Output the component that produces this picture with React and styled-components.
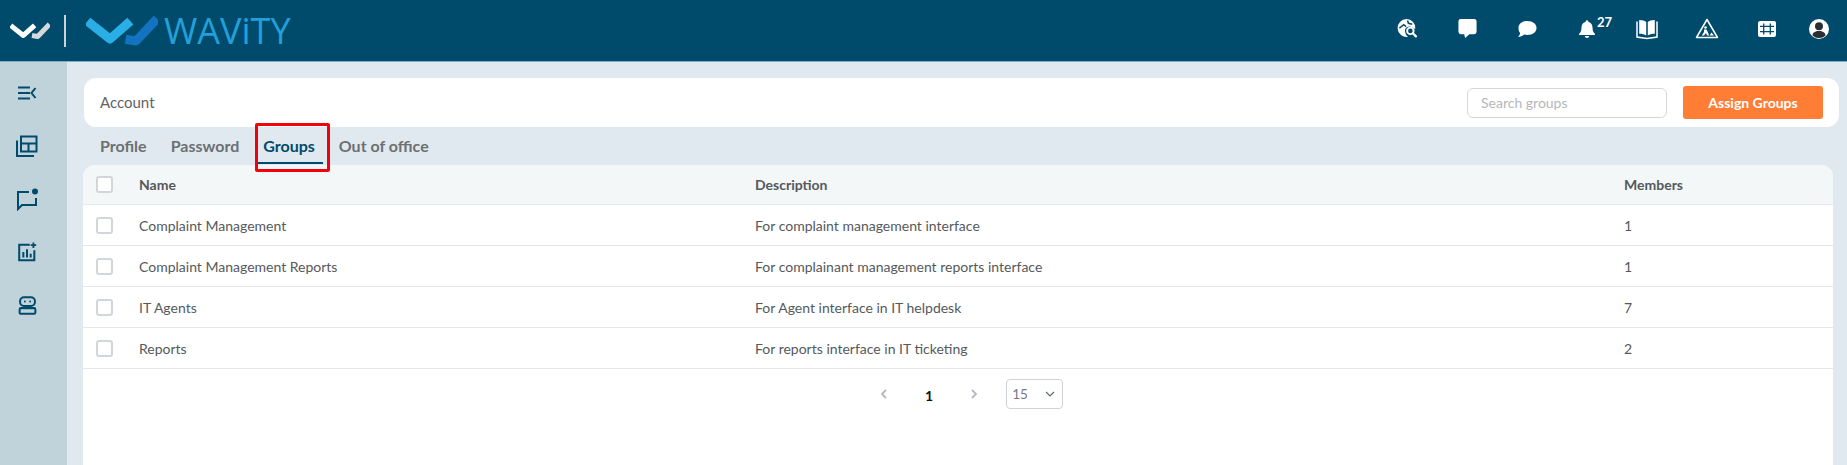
import React from "react";
import styled, { createGlobalStyle } from "styled-components";

const Global = createGlobalStyle`
  html, body { margin: 0; padding: 0; height: 100%; background: #e1e9f0; overflow: hidden; }
  body { font-family: Lato, "Open Sans", sans-serif; }
  * { box-sizing: border-box; }
`;

const Page = styled.div`
  width: 1847px; height: 465px; display: flex; flex-direction: column; overflow: hidden;
`;
const TopBar = styled.header`
  height: 62px; flex: none; background: #004b6b; border-bottom: 1px solid #7fb0c8;
  display: flex; align-items: center; justify-content: space-between;
`;
const Brand = styled.div`
  display: flex; align-items: center; padding-left: 10px;
`;
const Divider = styled.div`
  width: 2px; height: 32px; background: #c9d3d8; margin: 0 20px 0 14px;
`;
const BrandName = styled.span`
  font-family: "Open Sans", Lato, sans-serif; font-size: 36px; line-height: 1; font-weight: 500;
  color: #239fd9; margin-left: 6px;
`;
const IconBar = styled.div`
  display: flex; align-items: center; height: 100%; padding-right: 6px;
`;
const TopIcon = styled.div`
  position: relative; display: flex; align-items: center; justify-content: center;
  width: ${p => p.$w || 60}px; height: 30px; margin-top: -4px;
`;
const Badge = styled.span`
  position: absolute; left: 40px; top: 2px; font-size: 13px; font-weight: 700; color: #fff; line-height: 13px;
`;
const Body = styled.div`
  flex: 1; display: flex; min-height: 0;
`;
const SideBar = styled.nav`
  width: 67px; flex: none; background: #c0d3da; display: flex; flex-direction: column;
  align-items: flex-start; padding: 19px 0 0 15px; gap: 29px;
`;
const SideIcon = styled.div`
  width: 24px; height: 24px; display: flex; align-items: center; justify-content: center;
`;
const Main = styled.main`
  flex: 1; min-width: 0; position: relative; padding: 16px 14px 0 16px;
`;
const HeaderCard = styled.div`
  height: 49px; width: 1755px; margin-left: 1px; background: #fff; border-radius: 12px; display: flex; align-items: center;
  justify-content: space-between; padding: 0 16px;
`;
const Title = styled.div`
  font-size: 15px; color: #5f6468; padding-bottom: 2px;
`;
const Actions = styled.div`
  display: flex; align-items: center; gap: 16px;
`;
const Search = styled.input`
  width: 200px; height: 30px; border: 1px solid #d4d7da; border-radius: 6px; padding: 0 13px;
  font: 400 14px Lato, sans-serif; background: #fff; outline: none;
  &::placeholder { color: #b4b7b9; opacity: 1; }
`;
const AssignButton = styled.button`
  width: 140px; height: 33px; border: 0; border-radius: 3px; background: #ff7d34; color: #fff;
  font: 700 14px Lato, sans-serif; padding: 0;
`;
const Tabs = styled.div`
  display: flex; height: 38px; padding-left: 17px; align-items: flex-start; gap: 24px;
`;
const Tab = styled.div`
  font-size: 16px; font-weight: 700; line-height: 20px; padding-top: 9px; height: 36px;
  color: ${p => (p.$active ? "#004b6b" : "#6c7072")};
  position: relative;
  ${p => p.$active && `
    &::after { content: ""; position: absolute; left: -8px; right: -8px; top: 35px; height: 2px; background: #004b6b; }
  `}
`;
const RedBox = styled.div`
  position: absolute; left: 188px; top: 61px; width: 75px; height: 49px;
  border: 3px solid #f4000b; border-radius: 2px; pointer-events: none;
`;
const TableCard = styled.div`
  width: 1750px; height: 300px; background: #fff; border-radius: 12px 12px 0 0;
`;
const Row = styled.div`
  display: grid; grid-template-columns: 56px 616px 869px 1fr; align-items: center;
  height: ${p => (p.$head ? 40 : 41)}px; border-bottom: ${p => (p.$head ? "1px solid #e5ebef" : "1px solid #e3e7ea")};
  background: ${p => (p.$head ? "#f3f7f8" : "#fff")};
  border-radius: ${p => (p.$head ? "12px 12px 0 0" : "0")};
  color: #55595c; font-size: 14px; font-weight: ${p => (p.$head ? 700 : 400)};
`;
const CheckCell = styled.div`
  padding-left: 13px; display: flex; align-items: center;
`;
const Check = styled.span`
  display: block; width: 17px; height: 17px; border: 2px solid #d2d6da; border-radius: 3px; background: #fff;
`;
const Pager = styled.div`
  display: flex; align-items: center; height: 50px; padding-left: 795px;
`;
const PageNumber = styled.span`
  font-size: 14px; font-weight: 700; color: #111; margin: 0 35px; line-height: 20px; padding-top: 3px;
`;
const SizeSelect = styled.div`
  width: 57px; height: 30px; border: 1px solid #ced3d8; border-radius: 4px; margin-left: 26px;
  display: flex; align-items: center; justify-content: space-between; padding: 0 6px 0 5px;
  font-size: 13.5px; color: #777b7f;
`;

const LogoMark = ({ w, h, a, b }) => (
  <svg width={w} height={h} viewBox="0 0 72 30" fill="none">
    <path d="M5 9 L24 24 L41 9" stroke={a} strokeWidth="9" strokeLinejoin="round" strokeLinecap="square" transform="translate(0,-1)" />
    <path d="M44 24 L50 25 L68 6" stroke={b} strokeWidth="9" strokeLinejoin="round" strokeLinecap="square" />
  </svg>
);

const Ico = ({ size = 24, children, vb = "0 0 24 24" }) => (
  <svg width={size} height={size} viewBox={vb} fill="none">{children}</svg>
);
const W = "#fff", B = "#004b6b", G = "#004b6b";

const GlobeSearch = () => (
  <Ico size={21} vb="0 0 22 22">
    <path d="M10 1a9.500 9.500 0 1 0 1.500 18.900l-2-2.400c-1-2.500-1.500-4-1-5.500 1-3 5-4 7.600-2l3 1.500A9.500 9.500 0 0 0 10 1Z" fill={W} />
    <path d="M2.500 10.500 7 7l2.500 2M11 2.500l1 3 4 1" stroke={B} strokeWidth="1.600" />
    <circle cx="14" cy="13.500" r="3.400" stroke={W} strokeWidth="2" />
    <path d="m16.600 16 3.200 3.200" stroke={W} strokeWidth="2.400" strokeLinecap="round" />
  </Ico>
);
const SquareChat = () => (
  <Ico size={21} vb="0 0 22 22">
    <path d="M4 1h14a2.500 2.500 0 0 1 2.500 2.500v11a2.500 2.500 0 0 1-2.500 2.500h-5l-4.500 4-1-4H4a2.500 2.500 0 0 1-2.500-2.500v-11A2.500 2.500 0 0 1 4 1Z" fill={W} />
  </Ico>
);
const RoundChat = () => (
  <Ico size={22} vb="0 0 22 22">
    <path d="M11.500 3c5.300 0 9 2.900 9 7s-3.700 7-9 7c-1.300 0-2.300-.2-3.300-.5-1.700 1.600-3.700 2.500-6.200 2.500 1-1 2-2.500 2.100-4C3.100 14 2.500 12.100 2.500 10c0-4.100 3.700-7 9-7Z" fill={W} />
  </Ico>
);
const Bell = () => (
  <Ico size={20} vb="0 0 22 22">
    <path d="M11 1.500a1.600 1.600 0 0 1 1.600 1.700c3 .8 4.500 3.200 4.500 6.300 0 3.700 1 5 2.600 6.600v1.400H2.300v-1.400c1.600-1.600 2.600-2.900 2.600-6.600 0-3.100 1.500-5.500 4.500-6.300A1.600 1.600 0 0 1 11 1.500ZM8.600 18.800h4.800a2.400 2.200 0 0 1-4.800 0Z" fill={W} />
  </Ico>
);
const Book = () => (
  <Ico size={24}>
    <path d="M2 4.500v15.600l10 1.400 10-1.400V4.500" stroke={W} strokeWidth="1.500" />
    <path d="M4.200 3c3.200 0 5.800.7 7 2v13.500c-1.500-1.200-4-1.800-7-1.800V3ZM19.800 3c-3.200 0-5.800.7-7 2v13.500c1.500-1.200 4-1.800 7-1.800V3Z" fill={W} />
  </Ico>
);
const RoadSign = () => (
  <Ico size={24}>
    <path d="M12 2.500 22.500 20.500H1.500L12 2.500Z" stroke={W} strokeWidth="1.500" strokeLinejoin="round" />
    <circle cx="10.500" cy="10.500" r="1.300" fill={W} />
    <path d="M9 12.500h2.500l1.500 3 1 3H12l-1-2.500-2 2.500H6.800l2.200-3.500V12.500ZM14.500 18.500l2-3 2.500 3h-4.500Z" fill={W} />
  </Ico>
);
const Grid = () => (
  <Ico size={20} vb="0 0 20 20">
    <rect x="1" y="2" width="18" height="16" rx="2" fill={W} />
    <path d="M6.700 4.500v11M13.300 4.500v11M3 7.300h14M3 12.600h14" stroke={B} strokeWidth="1.300" />
  </Ico>
);
const Avatar = () => (
  <Ico size={20} vb="0 0 20 20">
    <circle cx="10" cy="10" r="10" fill={W} />
    <circle cx="10" cy="7.300" r="4" fill="#2a2f33" />
    <path d="M3.500 16.500c0-3 2.700-4.500 6.500-4.500s6.500 1.500 6.500 4.500A9 9 0 0 1 10 19a9 9 0 0 1-6.500-2.500Z" fill="#2a2f33" />
  </Ico>
);

const Collapse = () => (
  <Ico size={20} vb="0 0 20 20">
    <path d="M1 4.500h12M1 10h12M1 15.500h12M18.500 5 14.500 10l4 5" stroke={G} strokeWidth="2" />
  </Ico>
);
const Dashboard = () => (
  <Ico size={24}>
    <path d="M6 2.500h15.500v15H6zM6 9.500h15.500M13.500 9.500v8" stroke={G} strokeWidth="2" />
    <path d="M2 6.500v15.500h17" stroke={G} strokeWidth="2" />
  </Ico>
);
const ChatDot = () => (
  <Ico size={24}>
    <path d="M14 5H3v17l4-4h14v-7" stroke={G} strokeWidth="2" />
    <circle cx="20" cy="4.500" r="3" fill={G} />
  </Ico>
);
const ChartPlus = () => (
  <Ico size={22}>
    <path d="M15 4H3.500v17h16.500V10" stroke={G} strokeWidth="2.200" />
    <path d="M8 12v6M12 9v9M16 14v4" stroke={G} strokeWidth="2.200" />
    <path d="M19 1.500v6M16 4.500h6" stroke={G} strokeWidth="2" />
  </Ico>
);
const Bot = () => (
  <Ico size={21}>
    <rect x="3.500" y="2.500" width="17" height="10" rx="4.500" stroke={G} strokeWidth="2.300" />
    <rect x="3" y="15" width="18" height="6.500" rx="1.500" stroke={G} strokeWidth="2.300" />
    <circle cx="9" cy="7.500" r="1.100" fill={G} />
    <circle cx="15" cy="7.500" r="1.100" fill={G} />
  </Ico>
);
const Chevron = ({ d, c = "#b4b9bf", w = 1.8 }) => (
  <svg width="12" height="12" viewBox="0 0 12 12" fill="none">
    <path d={d} stroke={c} strokeWidth={w} />
  </svg>
);

const rows = [
  ["Complaint Management", "For complaint management interface", "1"],
  ["Complaint Management Reports", "For complainant management reports interface", "1"],
  ["IT Agents", "For Agent interface in IT helpdesk", "7"],
  ["Reports", "For reports interface in IT ticketing", "2"],
];

export default function App() {
  return (
    <Page>
      <Global />
      <TopBar>
        <Brand>
          <LogoMark w={40} h={18} a="#fff" b="#d5d9dc" />
          <Divider />
          <LogoMark w={72} h={30} a="#29aee6" b="#1273c0" />
          <BrandName>WAViTY</BrandName>
        </Brand>
        <IconBar>
          <TopIcon><GlobeSearch /></TopIcon>
          <TopIcon><SquareChat /></TopIcon>
          <TopIcon><RoundChat /></TopIcon>
          <TopIcon><Bell /><Badge>27</Badge></TopIcon>
          <TopIcon><Book /></TopIcon>
          <TopIcon><RoadSign /></TopIcon>
          <TopIcon><Grid /></TopIcon>
          <TopIcon $w={44}><Avatar /></TopIcon>
        </IconBar>
      </TopBar>
      <Body>
        <SideBar>
          <SideIcon><Collapse /></SideIcon>
          <SideIcon><Dashboard /></SideIcon>
          <SideIcon><ChatDot /></SideIcon>
          <SideIcon><ChartPlus /></SideIcon>
          <SideIcon><Bot /></SideIcon>
        </SideBar>
        <Main>
          <HeaderCard>
            <Title>Account</Title>
            <Actions>
              <Search placeholder="Search groups" />
              <AssignButton>Assign Groups</AssignButton>
            </Actions>
          </HeaderCard>
          <Tabs>
            <Tab>Profile</Tab>
            <Tab>Password</Tab>
            <Tab $active>Groups</Tab>
            <Tab>Out of office</Tab>
          </Tabs>
          <RedBox />
          <TableCard>
            <Row $head>
              <CheckCell><Check /></CheckCell>
              <span>Name</span>
              <span>Description</span>
              <span>Members</span>
            </Row>
            {rows.map(r => (
              <Row key={r[0]}>
                <CheckCell><Check /></CheckCell>
                <span>{r[0]}</span>
                <span>{r[1]}</span>
                <span>{r[2]}</span>
              </Row>
            ))}
            <Pager>
              <Chevron d="M8 2 4 6l4 4" />
              <PageNumber>1</PageNumber>
              <Chevron d="M4 2l4 4-4 4" />
              <SizeSelect>15<Chevron d="M2 4l4 4 4-4" c="#5f6a74" w={1.2} /></SizeSelect>
            </Pager>
          </TableCard>
        </Main>
      </Body>
    </Page>
  );
}
